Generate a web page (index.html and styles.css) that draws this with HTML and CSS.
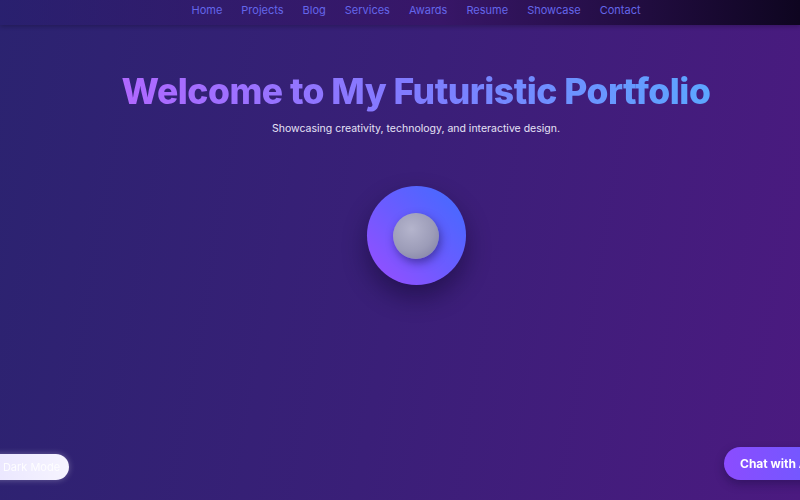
FILE: index.html
```html
<!DOCTYPE html>
<html lang="en">
<head>
  <meta charset="UTF-8">
  <title>Futuristic Portfolio</title>
  <link rel="stylesheet" href="styles.css">
</head>
<body>
  <nav class="navbar">
    <ul class="nav-links">
      <li><a href="#home">Home</a></li>
      <li><a href="#projects">Projects</a></li>
      <li><a href="#blog">Blog</a></li>
      <li><a href="#services">Services</a></li>
      <li><a href="#awards">Awards</a></li>
      <li><a href="#resume">Resume</a></li>
      <li><a href="#showcase">Showcase</a></li>
      <li><a href="#contact">Contact</a></li>
    </ul>
  </nav>
  <header class="hero">
    <h1 class="hero-title">Welcome to My Futuristic Portfolio</h1>
    <p class="hero-sub">Showcasing creativity, technology, and interactive design.</p>
    <div class="orb">
      <div class="orb-core"></div>
    </div>
  </header>
  <button class="mode-btn">Dark Mode</button>
  <button class="chat-btn">Chat with AI</button>
</body>
</html>
```
FILE: styles.css
```css
html, body {
  margin: 0;
  height: 100%;
}
body {
  font-family: Inter, "Noto Sans", sans-serif;
  background: linear-gradient(100deg, #2b2370 0%, #3a1f78 50%, #4b1a80 100%);
  color: #fff;
  overflow: hidden;
}
.navbar {
  height: 25px;
  display: flex;
  justify-content: center;
  align-items: flex-start;
  background: linear-gradient(90deg, rgba(40, 30, 110, 0.6) 0%, rgba(55, 20, 100, 0.8) 55%, #0e0520 100%);
  box-shadow: 0 2px 4px rgba(0, 0, 0, 0.2);
  padding-left: 32px;
}
.nav-links {
  list-style: none;
  display: flex;
  gap: 19px;
  margin: 0;
  padding: 0;
  line-height: 1;
}
.nav-links a {
  color: #6466ea;
  text-decoration: none;
  font-size: 11px;
}
.hero {
  display: flex;
  flex-direction: column;
  align-items: center;
  padding-top: 45px;
  padding-left: 32px;
}
.hero-title {
  margin: 0;
  font-size: 35.5px;
  font-weight: 800;
  letter-spacing: -0.5px;
  background: linear-gradient(90deg, #b068ff 0%, #7f7cff 50%, #5ca6ff 100%);
  -webkit-background-clip: text;
  background-clip: text;
  color: transparent;
}
.hero-sub {
  margin: 9px 0 0;
  font-size: 10.5px;
  color: #e6e2f6;
}
.orb {
  margin-top: 51px;
  width: 99px;
  height: 99px;
  border-radius: 50%;
  background: linear-gradient(225deg, #3f6cff 0%, #6a5cff 50%, #9b4dff 100%);
  box-shadow: 0 12px 25px rgba(10, 5, 40, 0.45);
  display: flex;
  justify-content: center;
  align-items: center;
}
.orb-core {
  width: 46px;
  height: 46px;
  border-radius: 50%;
  background: radial-gradient(circle at 40% 35%, #b4b4cc 0%, #9c9cb8 55%, #7b7aa0 100%);
  box-shadow: 2px 4px 8px rgba(30, 20, 90, 0.5);
}
.mode-btn {
  position: fixed;
  left: -20px;
  bottom: 20px;
  width: 89px;
  height: 26px;
  border: none;
  border-radius: 13px;
  background: linear-gradient(90deg, #e8e4ff, #f6f4ff);
  color: rgba(255, 255, 255, 0.9);
  font-family: Inter, sans-serif;
  font-size: 11px;
  padding-left: 20px;
  box-shadow: 0 0 6px rgba(255, 255, 255, 0.3);
}
.chat-btn {
  position: fixed;
  left: 724px;
  bottom: 20px;
  height: 33px;
  width: 110px;
  border: none;
  border-radius: 17px;
  background: linear-gradient(90deg, #8b4cff, #6c5cff);
  color: #fff;
  font-family: Inter, sans-serif;
  font-weight: 700;
  font-size: 12px;
  text-align: left;
  padding-left: 16px;
  box-shadow: 0 4px 10px rgba(20, 10, 60, 0.4);
}
```
